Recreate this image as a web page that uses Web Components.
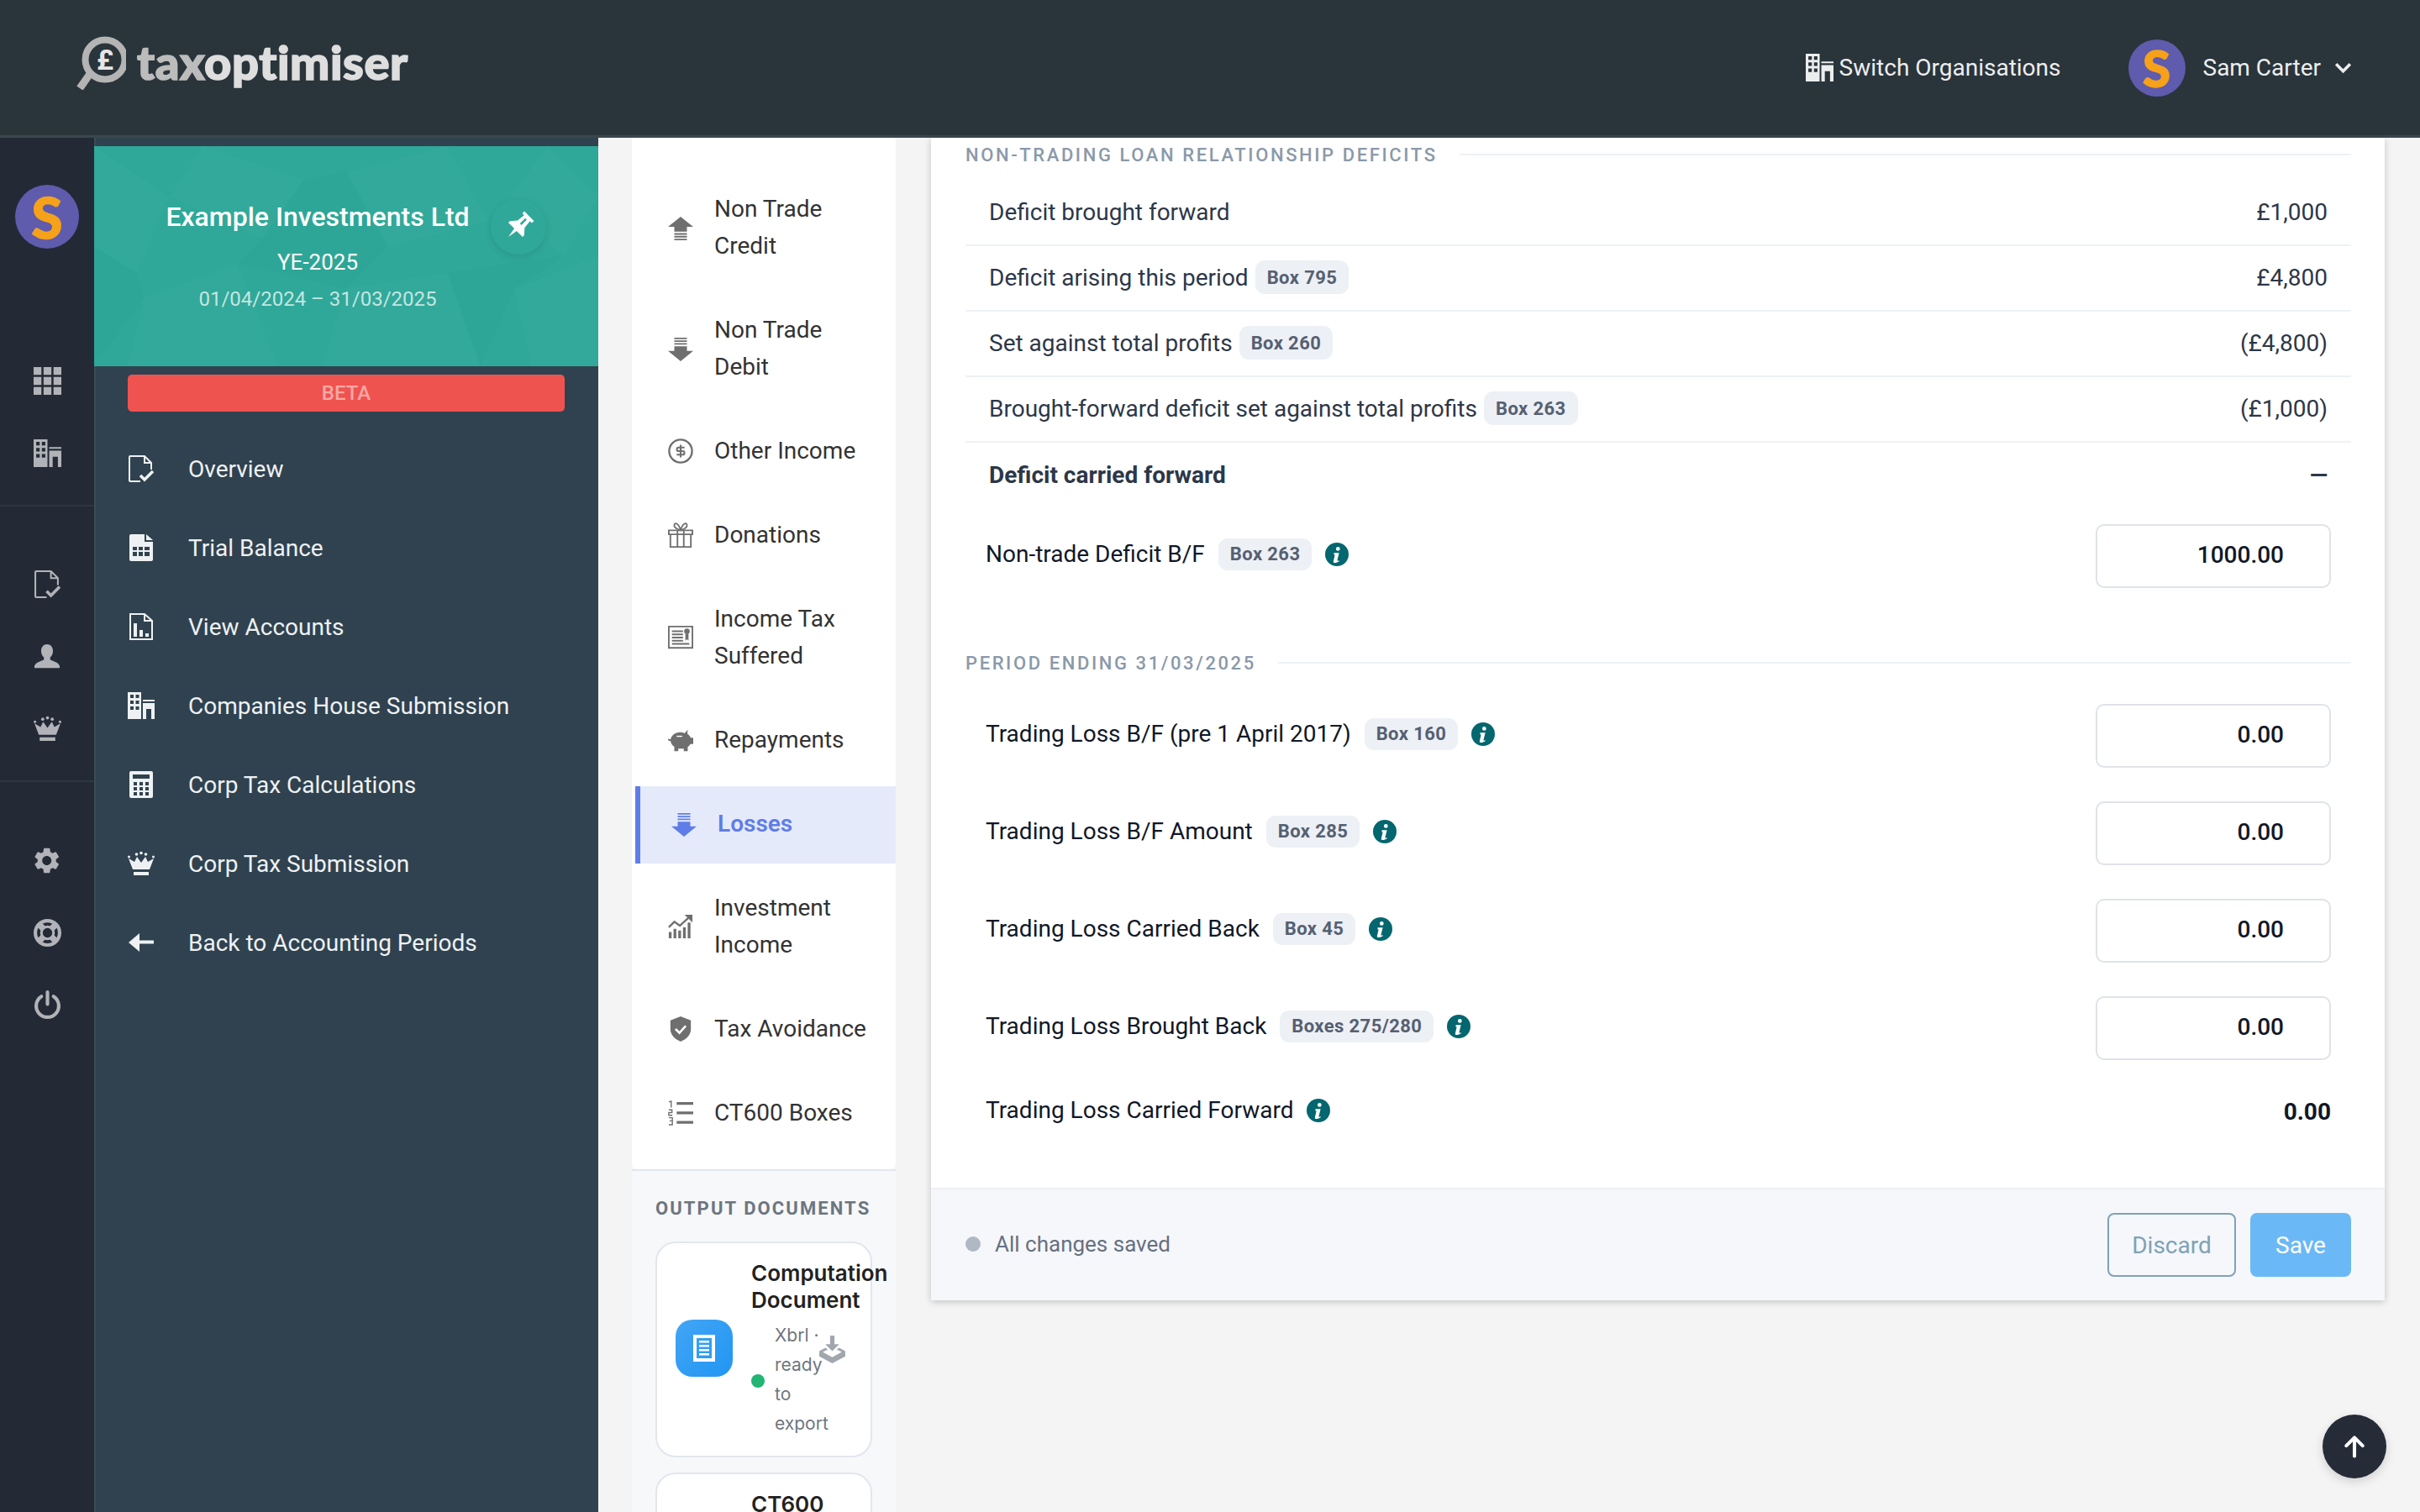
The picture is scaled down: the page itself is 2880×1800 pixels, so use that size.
<!DOCTYPE html>
<html lang="en">
<head>
<meta charset="utf-8">
<title>taxoptimiser</title>
<style>
	html, body { margin: 0; background: #f4f4f4; }
	body { width: 2880px; height: 1800px; overflow: hidden; font-family: Roboto, "Liberation Sans", sans-serif; }
</style>
</head>
<body>

<app-page>
	<top-bar slot="top"></top-bar>
	<icon-rail slot="rail"></icon-rail>
	<org-sidebar slot="side">
		<nav-item icon="docCheck">Overview</nav-item>
		<nav-item icon="sheet">Trial Balance</nav-item>
		<nav-item icon="docChart">View Accounts</nav-item>
		<nav-item icon="building">Companies House Submission</nav-item>
		<nav-item icon="calc">Corp Tax Calculations</nav-item>
		<nav-item icon="crown">Corp Tax Submission</nav-item>
		<nav-item icon="back">Back to Accounting Periods</nav-item>
	</org-sidebar>
	<section-nav slot="sections">
		<sub-item icon="upLines">Non Trade Credit</sub-item>
		<sub-item icon="downLines">Non Trade Debit</sub-item>
		<sub-item icon="dollar">Other Income</sub-item>
		<sub-item icon="gift">Donations</sub-item>
		<sub-item icon="certificate">Income Tax Suffered</sub-item>
		<sub-item icon="piggy">Repayments</sub-item>
		<sub-item icon="downLines" active>Losses</sub-item>
		<sub-item icon="chart">Investment Income</sub-item>
		<sub-item icon="shield">Tax Avoidance</sub-item>
		<sub-item icon="list">CT600 Boxes</sub-item>
		<doc-card slot="docs" title="Computation Document" status="Xbrl · ready to export" full></doc-card>
		<doc-card slot="docs" title="CT600"></doc-card>
	</section-nav>
	<loss-panel slot="main">
		<section-head>NON-TRADING LOAN RELATIONSHIP DEFICITS</section-head>
		<sum-row value="£1,000">Deficit brought forward</sum-row>
		<sum-row value="£4,800" box="Box 795">Deficit arising this period</sum-row>
		<sum-row value="(£4,800)" box="Box 260">Set against total profits</sum-row>
		<sum-row value="(£1,000)" box="Box 263">Brought-forward deficit set against total profits</sum-row>
		<sum-row value="—" strong>Deficit carried forward</sum-row>
		<field-row value="1000.00" box="Box 263" style="margin-top:19px">Non-trade Deficit B/F</field-row>
		<section-head style="margin-top:76px;margin-bottom:36px">PERIOD ENDING 31/03/2025</section-head>
		<field-row value="0.00" box="Box 160">Trading Loss B/F (pre 1 April 2017)</field-row>
		<field-row value="0.00" box="Box 285">Trading Loss B/F Amount</field-row>
		<field-row value="0.00" box="Box 45">Trading Loss Carried Back</field-row>
		<field-row value="0.00" box="Boxes 275/280">Trading Loss Brought Back</field-row>
		<field-row value="0.00" plain>Trading Loss Carried Forward</field-row>
	</loss-panel>
</app-page>
<scroll-top></scroll-top>

<script>
	/* icon shapes, all on a 32 x 32 box */
	const iconShapes = {
		grid: '<path d="M0 0h9v9H0zM11.500 0h9v9h-9zM23 0h9v9h-9zM0 11.500h9v9H0zM11.500 11.500h9v9h-9zM23 11.500h9v9h-9zM0 23h9v9H0zM11.500 23h9v9h-9zM23 23h9v9h-9z"/>',
		building: '<path fill-rule="evenodd" d="M0 0h16v32H0zM3 3v4h4V3zM9.500 3v4h4V3zM3 10v4h4v-4zM9.500 10v4h4v-4zM3 17v4h4v-4zM9.500 17v4h4v-4z"/><path d="M18 9h14v2H18zM18 13h14v19h-4V20h-6v12h-4z"/>',
		docCheck: '<path fill="none" stroke="currentColor" stroke-width="2" d="M15 31H3a1 1 0 0 1-1-1V2a1 1 0 0 1 1-1h17l8 8v8M20 1v8h8"/><path fill="none" stroke="currentColor" stroke-width="3.500" d="M15 24l5 5 10-10"/>',
		sheet: '<path fill-rule="evenodd" d="M2 2a2 2 0 0 1 2-2h16v9h10v21a2 2 0 0 1-2 2H4a2 2 0 0 1-2-2zM6 15v4h5v-4zM13 15v4h5v-4zM20 15v4h6v-4zM6 21v5h5v-5zM13 21v5h5v-5zM20 21v5h6v-5z"/><path d="M22 0l8 7h-8z"/>',
		docChart: '<path fill="none" stroke="currentColor" stroke-width="2" d="M3 1h17l9 8v22H3zM20 1v8h9"/><path d="M7 12h4v16H7zM14 20h4v8h-4zM21 24h4v4h-4z"/>',
		calc: '<path fill-rule="evenodd" d="M2 2a2 2 0 0 1 2-2h24a2 2 0 0 1 2 2v28a2 2 0 0 1-2 2H4a2 2 0 0 1-2-2zM6 4v5h20V4zM7 13v4h4v-4zM14 13v4h4v-4zM21 13v4h4v-4zM7 19v4h4v-4zM14 19v4h4v-4zM21 19v4h4v-4zM7 25v4h4v-4zM14 25v4h4v-4zM21 25v4h4v-4z"/>',
		crown: '<path d="M1 10l7 4 3-6 5 7 5-7 3 6 7-4-5 13H6zM7 26h18v4H7z"/><circle cx="1.500" cy="8" r="1.500"/><circle cx="30.500" cy="8" r="1.500"/><circle cx="10.500" cy="5" r="1.800"/><circle cx="21.500" cy="5" r="1.800"/><circle cx="16" cy="3.500" r="1.800"/>',
		back: '<path d="M1 16L14 5v8.500h17v4H14V27z"/>',
		person: '<path d="M16 0c4.500 0 7.500 3.500 7.500 8.500 0 3.500-1.500 6.500-3.500 8v3c3 2 10 3 12 8v2.500H0V27.500c2-5 9-6 12-8v-3c-2-1.500-3.500-4.500-3.500-8C8.500 3.500 11.500 0 16 0z"/>',
		gear: '<path transform="scale(1.480) translate(-1.700 -1.200)" d="M19.140 12.940c.04-.3.060-.61.060-.94 0-.32-.02-.64-.07-.94l2.030-1.580a.49.49 0 0 0 .12-.61l-1.920-3.320a.488.488 0 0 0-.59-.22l-2.390.96c-.5-.38-1.030-.7-1.620-.94l-.36-2.540a.484.484 0 0 0-.48-.41h-3.840c-.24 0-.43.17-.47.41l-.36 2.540c-.59.24-1.130.57-1.620.94l-2.390-.96c-.22-.08-.47 0-.59.22L2.740 8.870c-.12.21-.08.47.12.61l2.030 1.580c-.05.3-.09.63-.09.94s.02.64.07.94l-2.030 1.580a.49.49 0 0 0-.12.61l1.920 3.320c.12.22.37.29.59.22l2.390-.96c.5.38 1.030.7 1.620.94l.36 2.540c.05.24.24.41.48.41h3.840c.24 0 .44-.17.47-.41l.36-2.540c.59-.24 1.130-.56 1.620-.94l2.390.96c.22.08.47 0 .59-.22l1.920-3.320c.12-.22.07-.47-.12-.61l-2.010-1.580zM12 15.600c-1.980 0-3.600-1.620-3.600-3.600s1.620-3.600 3.600-3.600 3.600 1.620 3.600 3.600-1.620 3.600-3.600 3.600z"/>',
		buoy: '<g fill="none" stroke="currentColor"><circle cx="16" cy="16" r="14" stroke-width="4"/><circle cx="16" cy="16" r="7" stroke-width="3"/><path stroke-width="7" d="M5 5l6 6M27 5l-6 6M5 27l6-6M27 27l-6-6"/></g>',
		power: '<path fill="none" stroke="currentColor" stroke-width="4" stroke-linecap="round" d="M9 7a13 13 0 1 0 14 0M16 2v14"/>',
		chevron: '<path fill="none" stroke="currentColor" stroke-width="6" d="M2 9l14 14L30 9"/>',
		pin: '<path fill-rule="evenodd" transform="rotate(45 16 16)" d="M8 -2h16v3.500h-3l1 10 6 7v2.500H18l-2 12-2-12H4V18.500l6-7 1-10H8zM14.500 3v9h2.500V3z"/>',
		upLines: '<path d="M16 2l16 13h-8v6H8v-6H0zM8 23h16v2H8zM8 26.500h16v2H8zM8 30h16v2H8z"/>',
		downLines: '<path d="M16 32l16-13h-8v-6H8v6H0zM8 9h16v2H8zM8 5.500h16v2H8zM8 2h16v2H8z"/>',
		dollar: '<circle cx="16" cy="16" r="14.500" fill="none" stroke="currentColor" stroke-width="2.500"/><path fill="none" stroke="currentColor" stroke-width="2.200" d="M21 11.500h-7.500a2.200 2.200 0 0 0 0 4.500h5a2.300 2.300 0 0 1 0 4.600H11M16 8v16"/>',
		gift: '<g fill="none" stroke="currentColor" stroke-width="2"><path d="M1 10h30v5H1zM3 15v16h26V15M12 10v21M20 10v21"/><path d="M16 10c-3-1-9-3-8-7s6-1 8 7c2-8 7-11 8-7s-5 6-8 7z"/></g>',
		certificate: '<path fill="none" stroke="currentColor" stroke-width="2" d="M1 2h30v27H1z"/><path d="M5 7h14v2H5zM5 11h14v2H5zM5 15h14v2H5zM5 19h14v2H5zM5 23h22v2H5z"/><circle cx="24" cy="8" r="3.500"/><path d="M22 11h4v9l-2-2-2 2z"/>',
		piggy: '<path d="M25 3l-.5 5c2 1.500 3.500 3 4.200 5H32v8h-3.500c-.8 1.500-2 2.800-3.500 3.800V30h-5v-3h-7v3H8v-5.500C5 22.500 3.500 20 3.200 17H2c-1.500 0-2-1-2-3l2 1h1.300C4.200 10 9 6 15 6c2.500 0 4.800.5 6 1.500z"/><path fill="#fff" d="M11 10.500h7V12h-7z"/>',
		chart: '<path d="M1 23h3.500v8H1zM7 19h3.500v12H7zM13 21h3.500v10H13zM19 17h3.500v14H19zM25 11h3.500v20H25z"/><path fill="none" stroke="currentColor" stroke-width="2.500" d="M1 17l7-7 7 5L28 3"/><path d="M21 1h10v10z"/>',
		shield: '<path d="M16 0l13 5v11c0 8-6 13-13 16C9 29 3 24 3 16V5z"/><path fill="none" stroke="#fff" stroke-width="2.800" d="M9.500 16l5 5 8-9"/>',
		list: '<path d="M11 2h21v3.500H11zM11 14h21v3.500H11zM11 26h21v3.500H11z"/><path fill="none" stroke="currentColor" stroke-width="1.500" d="M1 2l3-1v8M1 12h4v3.500H1V19h4.500M1 22h4.500v4H2M5.500 26v5H1"/>',
		tray: '<path d="M12.500 0h5v10H23l-8 8-8-8h5.500z"/><path d="M7 14L0 18v6l15 8 15-8v-6l-7-4-3 2 6 3-11 6-11-6 6-3z"/>',
		docLines: '<path fill-rule="evenodd" d="M3 0h26v32H3zM7 4v24h18V4z"/><path d="M10 7h12v2.500H10zM10 12h12v2.500H10zM10 17h12v2.500H10zM10 22h12v2.500H10z"/>',
		up: '<path fill="none" stroke="currentColor" stroke-width="5" stroke-linecap="round" stroke-linejoin="round" d="M16 30V3M4 15L16 3l12 12"/>',
		info: '<circle cx="16" cy="16" r="16" fill="#04666e"/><circle cx="17.500" cy="8.500" r="2.700" fill="#fff"/><path fill="#fff" d="M12 14h7l-2.500 10c-.2 1 .8 1 2.500 0v1.500c-2 1.500-4 2-6 2-1.500 0-2-1-1.700-2.500l2-8.500H12z"/>',
	};

	class TxIcon extends HTMLElement {
		connectedCallback() {
			const size = this.getAttribute('size') || 32;
			const shape = iconShapes[this.getAttribute('name')] || '';
			this.attachShadow({ mode: 'open' });
			this.shadowRoot.innerHTML = `
				<style>
					:host { display: inline-flex; flex: none; width: ${size}px; height: ${size}px; }
					svg { width: 100%; height: 100%; fill: currentColor; display: block; overflow: visible; }
				</style>
				<svg viewBox="0 0 32 32">${shape}</svg>
			`;
		}
	}
	customElements.define('tx-icon', TxIcon);

	class SAvatar extends HTMLElement {
		connectedCallback() {
			const size = this.getAttribute('size') || 68;
			this.attachShadow({ mode: 'open' });
			this.shadowRoot.innerHTML = `
				<style>
					:host {
						display: inline-flex; flex: none; align-items: center; justify-content: center;
						width: ${size}px; height: ${size}px; border-radius: 50%; background: #5f5bad;
						color: #f6a11a; font: 900 ${Math.round(size * 0.88)}px/1 Lato, sans-serif;
						-webkit-text-stroke: 1.5px #f6a11a;
					}
				</style>
				S
			`;
		}
	}
	customElements.define('s-avatar', SAvatar);

	class AppPage extends HTMLElement {
		constructor() {
			super();
			this.attachShadow({ mode: 'open' });
			this.shadowRoot.innerHTML = `
				<style>
					:host {
						display: grid; width: 2880px; height: 1800px; overflow: hidden;
						grid-template-columns: 112px 600px 40px 314px 42px 1730px 42px;
						grid-template-rows: 164px 1636px;
					}
					.top { grid-column: 1 / -1; }
					.sections { grid-column: 4; }
					.main { grid-column: 6; }
				</style>
				<div class="top"><slot name="top"></slot></div>
				<slot name="rail"></slot>
				<slot name="side"></slot>
				<div class="sections"><slot name="sections"></slot></div>
				<div class="main"><slot name="main"></slot></div>
			`;
		}
	}
	customElements.define('app-page', AppPage);

	class TopBar extends HTMLElement {
		constructor() {
			super();
			this.attachShadow({ mode: 'open' });
			this.shadowRoot.innerHTML = `
				<style>
					:host {
						display: flex; align-items: center; box-sizing: border-box; height: 164px;
						padding: 0 82px 0 90px; background: #2a343b; border-bottom: 3px solid #3b464d;
						color: #eceeee; font-size: 28px;
					}
					.logo { display: flex; align-items: flex-start; gap: 13px; margin-top: -14px; }
					.logo svg { width: 60px; height: 66px; display: block; }
					.word { font: 900 56px/66px Lato, sans-serif; letter-spacing: .6px; -webkit-text-stroke: 1.6px currentColor; }
					.tax { color: #bcbcbc; }
					.rest { color: #dedede; }
					.switch { display: flex; align-items: center; gap: 7px; margin-left: auto; margin-right: 80px; }
					.user { display: flex; align-items: center; }
					.name { margin: 0 17px 0 21px; }
				</style>
				<div class="logo">
					<svg viewBox="0 0 60 66">
						<circle cx="35" cy="30" r="23.500" fill="none" stroke="#b4b4b4" stroke-width="8"/>
						<path d="M17 47L5 64" stroke="#b4b4b4" stroke-width="9" fill="none"/>
						<text x="35" y="42" text-anchor="middle" font-family="Roboto" font-weight="700" font-size="34" fill="#e6e6e6">£</text>
					</svg>
					<span class="word"><span class="tax">tax</span><span class="rest">optimiser</span></span>
				</div>
				<div class="switch"><tx-icon name="building" size="33"></tx-icon><span>Switch Organisations</span></div>
				<div class="user">
					<s-avatar size="68"></s-avatar>
					<span class="name">Sam Carter</span>
					<tx-icon name="chevron" size="19"></tx-icon>
				</div>
			`;
		}
	}
	customElements.define('top-bar', TopBar);

	class IconRail extends HTMLElement {
		constructor() {
			super();
			this.attachShadow({ mode: 'open' });
			this.shadowRoot.innerHTML = `
				<style>
					:host {
						display: flex; flex-direction: column; height: 1636px;
						background: #232a35; color: #b2b3b8;
					}
					.group { display: flex; flex-direction: column; align-items: center; box-sizing: border-box; border-bottom: 2px solid #2e3641; }
					.group:last-child { border-bottom: 0; }
					.cell { display: flex; align-items: center; justify-content: center; height: 86px; flex: none; }
					s-avatar { margin: 56px 0 114px; }
				</style>
				<div class="group" style="height:439px">
					<s-avatar size="76"></s-avatar>
					<div class="cell"><tx-icon name="grid" size="33"></tx-icon></div>
					<div class="cell"><tx-icon name="building" size="33"></tx-icon></div>
				</div>
				<div class="group" style="height:328px;padding-top:49px">
					<div class="cell"><tx-icon name="docCheck" size="33"></tx-icon></div>
					<div class="cell"><tx-icon name="person" size="30" style="margin-top:2px"></tx-icon></div>
					<div class="cell"><tx-icon name="crown" size="33"></tx-icon></div>
				</div>
				<div class="group" style="padding-top:50px">
					<div class="cell"><tx-icon name="gear" size="33"></tx-icon></div>
					<div class="cell"><tx-icon name="buoy" size="33"></tx-icon></div>
					<div class="cell"><tx-icon name="power" size="33" style="margin-top:-2px"></tx-icon></div>
				</div>
			`;
		}
	}
	customElements.define('icon-rail', IconRail);

	class OrgSidebar extends HTMLElement {
		constructor() {
			super();
			this.attachShadow({ mode: 'open' });
			this.shadowRoot.innerHTML = `
				<style>
					:host {
						display: block; height: 1636px; background: #30424f; padding-top: 10px; box-sizing: border-box;
						box-shadow: inset 2px 0 0 #3a4b58;
					}
					.card {
						position: relative; box-sizing: border-box; height: 262px; padding: 61px 0 0 0; overflow: hidden;
						background: #2fa899; color: #fff;
					}
					.facets { position: absolute; inset: 0; width: 100%; height: 100%; }
					.text { position: relative; width: 532px; text-align: center; }
					h1 { margin: 0; font-size: 32px; line-height: 46px; font-weight: 500; }
					.year { margin-top: 11px; font-size: 26px; line-height: 40px; }
					.dates { margin-top: 6px; font-size: 24px; line-height: 36px; color: rgba(255, 255, 255, .72); }
					.pin {
						position: absolute; left: 472px; top: 63px; width: 66px; height: 66px; border-radius: 50%;
						display: flex; align-items: center; justify-content: center;
						background: #2fa899; box-shadow: 0 3px 8px rgba(0, 0, 0, .1);
					}
					.beta {
						margin: 10px 40px 0; height: 44px; border-radius: 5px; background: #ef5350; color: #f9a8a4;
						font-size: 24px; font-weight: 500; line-height: 44px; text-align: center;
					}
					nav { padding-top: 21px; }
				</style>
				<div class="card">
					<svg class="facets" viewBox="0 0 600 262" preserveAspectRatio="none">
						<path fill="#fff" opacity=".014" d="M0 0L90 60 50 150 0 120zM130 0L250 40 200 110 90 60zM300 30L420 0 470 90 350 120zM540 0L600 60 560 130 480 80zM60 180L170 140 220 262H40zM300 170L420 150 460 262H270zM500 170L600 130V262H520z"/>
						<path fill="#000" opacity=".012" d="M200 110L350 120 300 170 170 140zM420 150L560 130 500 170 460 262zM0 120L50 150 60 180 0 262zM250 40L300 30 350 120 200 110z"/>
					</svg>
					<div class="text">
						<h1>Example Investments Ltd</h1>
						<div class="year">YE-2025</div>
						<div class="dates">01/04/2024 – 31/03/2025</div>
					</div>
					<div class="pin"><tx-icon name="pin" size="32"></tx-icon></div>
				</div>
				<div class="beta">BETA</div>
				<nav><slot></slot></nav>
			`;
		}
	}
	customElements.define('org-sidebar', OrgSidebar);

	class NavItem extends HTMLElement {
		connectedCallback() {
			this.attachShadow({ mode: 'open' });
			this.shadowRoot.innerHTML = `
				<style>
					:host {
						display: flex; align-items: center; gap: 40px; height: 94px; padding-left: 40px;
						color: #eef1f3; font-size: 28px;
					}
				</style>
				<tx-icon name="${this.getAttribute('icon')}" size="32"></tx-icon>
				<slot></slot>
			`;
		}
	}
	customElements.define('nav-item', NavItem);

	class SectionNav extends HTMLElement {
		constructor() {
			super();
			this.attachShadow({ mode: 'open' });
			this.shadowRoot.innerHTML = `
				<style>
					:host { display: flex; flex-direction: column; height: 1636px; background: #f7f8fa; }
					.list {
						flex: none; box-sizing: border-box; height: 1228px; padding-top: 39px;
						display: flex; flex-direction: column; gap: 8px;
						background: #fff; border-radius: 0 0 8px 8px;
					}
					.docs { border-top: 2px solid #e3e6ee; padding: 32px 28px 0 28px; display: flex; flex-direction: column; gap: 18px; }
					h2 {
						margin: 0 0 8px; font: 700 22px/26px Roboto, sans-serif; letter-spacing: 2.1px;
						color: #6c7680; white-space: nowrap;
					}
				</style>
				<div class="list"><slot></slot></div>
				<div class="docs">
					<h2>OUTPUT DOCUMENTS</h2>
					<slot name="docs"></slot>
				</div>
			`;
		}
	}
	customElements.define('section-nav', SectionNav);

	class SubItem extends HTMLElement {
		connectedCallback() {
			const active = this.hasAttribute('active');
			this.attachShadow({ mode: 'open' });
			this.shadowRoot.innerHTML = `
				<style>
					:host {
						display: flex; align-items: center; gap: 25px; box-sizing: border-box;
						padding: 24px 16px 24px 43px; font-size: 28px; line-height: 44px;
						color: #333;
					}
					:host([active]) {
						margin: 1px 0 -1px 4px; padding: 23px 16px 25px 37px; border-left: 6px solid #5f7de8;
						background: #e5eafb; color: #5f7de8; font-weight: 600;
					}
					tx-icon { color: ${active ? '#5f7de8' : '#6f6f6f'}; }
					.text { width: 190px; }
				</style>
				<tx-icon name="${this.getAttribute('icon')}" size="30"></tx-icon>
				<div class="text"><slot></slot></div>
			`;
		}
	}
	customElements.define('sub-item', SubItem);

	class DocCard extends HTMLElement {
		connectedCallback() {
			const full = this.hasAttribute('full');
			this.attachShadow({ mode: 'open' });
			this.shadowRoot.innerHTML = `
				<style>
					:host {
						display: flex; align-items: ${full ? 'center' : 'flex-start'}; gap: 22px; flex: none;
						position: relative; box-sizing: border-box; width: 258px; height: 257px; padding: 20px 21px 21px 22px;
						background: #fff; border: 2px solid #e3e6ee; border-radius: 24px;
						font-family: Inter, Roboto, sans-serif;
					}
					.art {
						flex: none; width: 68px; height: 68px; border-radius: 20px; color: #fff;
						display: flex; align-items: center; justify-content: center; margin-top: -2px;
						background: linear-gradient(135deg, #42a5f5, #2196f3);
					}
					.title { font-size: 26px; line-height: 32px; font-weight: 600; color: #222; width: 135px; }
					.status { display: flex; align-items: center; gap: 12px; margin-top: 8px; }
					.dot { flex: none; width: 16px; height: 16px; border-radius: 50%; background: #22b573; margin-top: 4px; }
					.label { width: 56px; font-size: 21px; line-height: 35px; color: #6e7681; }
					.save { position: absolute; left: 193px; top: 110px; color: #a2a7ae; }
				</style>
				${full ? '<div class="art"><tx-icon name="docLines" size="32"></tx-icon></div>' : '<div style="width:68px;flex:none"></div>'}
				<div>
					<div class="title">${this.getAttribute('title')}</div>
					${full ? `<div class="status"><span class="dot"></span><span class="label">${this.getAttribute('status')}</span></div>` : ''}
				</div>
				${full ? '<tx-icon class="save" name="tray" size="33"></tx-icon>' : ''}
			`;
		}
	}
	customElements.define('doc-card', DocCard);

	class LossPanel extends HTMLElement {
		constructor() {
			super();
			this.attachShadow({ mode: 'open' });
			this.shadowRoot.innerHTML = `
				<style>
					:host {
						display: flex; flex-direction: column; box-sizing: border-box; width: 1730px; height: 1384px;
						background: #fff; box-shadow: 0 2px 8px rgba(0, 0, 0, .2);
					}
					.body { flex: 1; padding: 7px 40px 0 41px; }
					footer {
						display: flex; align-items: center; gap: 17px; box-sizing: border-box; height: 134px; padding: 0 40px 0 41px;
						background: #f5f7fb; border-top: 2px solid #eeeff2;
					}
					.dot { width: 18px; height: 18px; border-radius: 50%; background: #b0b8c4; margin-top: -2px; }
					.state { flex: 1; font-size: 26px; color: #667080; margin-top: -3px; }
					.btn {
						box-sizing: border-box; height: 76px; display: flex; align-items: center; justify-content: center;
						border-radius: 8px; font-size: 28px;
					}
					.discard { width: 153px; border: 2px solid #7fa2b5; color: #7fa2b5; }
					.save { width: 120px; background: #6bb8f6; color: #fff; }
				</style>
				<div class="body"><slot></slot></div>
				<footer>
					<span class="dot"></span>
					<span class="state">All changes saved</span>
					<span class="btn discard">Discard</span>
					<span class="btn save">Save</span>
				</footer>
			`;
		}
	}
	customElements.define('loss-panel', LossPanel);

	class SectionHead extends HTMLElement {
		constructor() {
			super();
			this.attachShadow({ mode: 'open' });
			this.shadowRoot.innerHTML = `
				<style>
					:host {
						display: flex; align-items: center; gap: 26px; height: 26px; margin-bottom: 18px;
						font-size: 22px; font-weight: 500; letter-spacing: 2.6px; color: #8a99aa; white-space: nowrap;
					}
					i { flex: 1; height: 2px; background: #eef1f5; }
				</style>
				<slot></slot><i></i>
			`;
		}
	}
	customElements.define('section-head', SectionHead);

	class BoxBadge extends HTMLElement {
		constructor() {
			super();
			this.attachShadow({ mode: 'open' });
			this.shadowRoot.innerHTML = `
				<style>
					:host {
						display: inline-flex; align-items: center; flex: none; box-sizing: border-box; height: 38px; padding: 0 14px;
						border-radius: 11px; background: #edf0f5; color: #566072;
						font-size: 22px; font-weight: 700; letter-spacing: .4px; white-space: nowrap;
					}
				</style>
				<slot></slot>
			`;
		}
	}
	customElements.define('box-badge', BoxBadge);

	class SumRow extends HTMLElement {
		connectedCallback() {
			const box = this.getAttribute('box');
			this.attachShadow({ mode: 'open' });
			this.shadowRoot.innerHTML = `
				<style>
					:host {
						display: flex; align-items: center; gap: 8px; box-sizing: border-box; height: 78px; padding: 0 28px 2px 28px;
						border-bottom: 2px solid #eef1f5; font-size: 28px; color: #2d3748;
					}
					:host([strong]) { border-bottom: 0; font-weight: 700; }
					.value { margin-left: auto; }
				</style>
				<slot></slot>
				${box ? `<box-badge style="height:40px">${box}</box-badge>` : ''}
				<span class="value">${this.getAttribute('value')}</span>
			`;
		}
	}
	customElements.define('sum-row', SumRow);

	class FieldRow extends HTMLElement {
		connectedCallback() {
			const box = this.getAttribute('box');
			const plain = this.hasAttribute('plain');
			this.attachShadow({ mode: 'open' });
			this.shadowRoot.innerHTML = `
				<style>
					:host {
						display: flex; align-items: center; gap: 16px; box-sizing: border-box; min-height: 76px;
						margin-bottom: 40px; padding: 0 24px 0 24px; font-size: 28px; color: #111827;
					}
					:host([plain]) { min-height: 44px; }
					.label { display: flex; align-items: center; gap: 16px; margin-bottom: 5px; }
					.value { margin-left: auto; font-weight: 700; color: #111827; margin-bottom: 2px; }
					.input {
						margin-left: auto; box-sizing: border-box; width: 280px; height: 76px; padding: 0 54px 3px 0;
						display: flex; align-items: center; justify-content: flex-end;
						background: #fff; border: 2px solid #dfe3e8; border-radius: 10px;
						font-weight: 500;
					}
				</style>
				<div class="label">
					<slot></slot>
					${box ? `<box-badge>${box}</box-badge>` : ''}
					<tx-icon name="info" size="28"></tx-icon>
				</div>
				${plain ? `<span class="value">${this.getAttribute('value')}</span>` : `<div class="input">${this.getAttribute('value')}</div>`}
			`;
		}
	}
	customElements.define('field-row', FieldRow);

	class ScrollTop extends HTMLElement {
		constructor() {
			super();
			this.attachShadow({ mode: 'open' });
			this.shadowRoot.innerHTML = `
				<style>
					:host {
						position: fixed; left: 2764px; top: 1684px; width: 76px; height: 76px; border-radius: 50%;
						display: flex; align-items: center; justify-content: center;
						background: #252b37; color: #fff; box-shadow: 0 4px 12px rgba(0, 0, 0, .15);
					}
				</style>
				<tx-icon name="up" size="26"></tx-icon>
			`;
		}
	}
	customElements.define('scroll-top', ScrollTop);
</script>
</body>
</html>
